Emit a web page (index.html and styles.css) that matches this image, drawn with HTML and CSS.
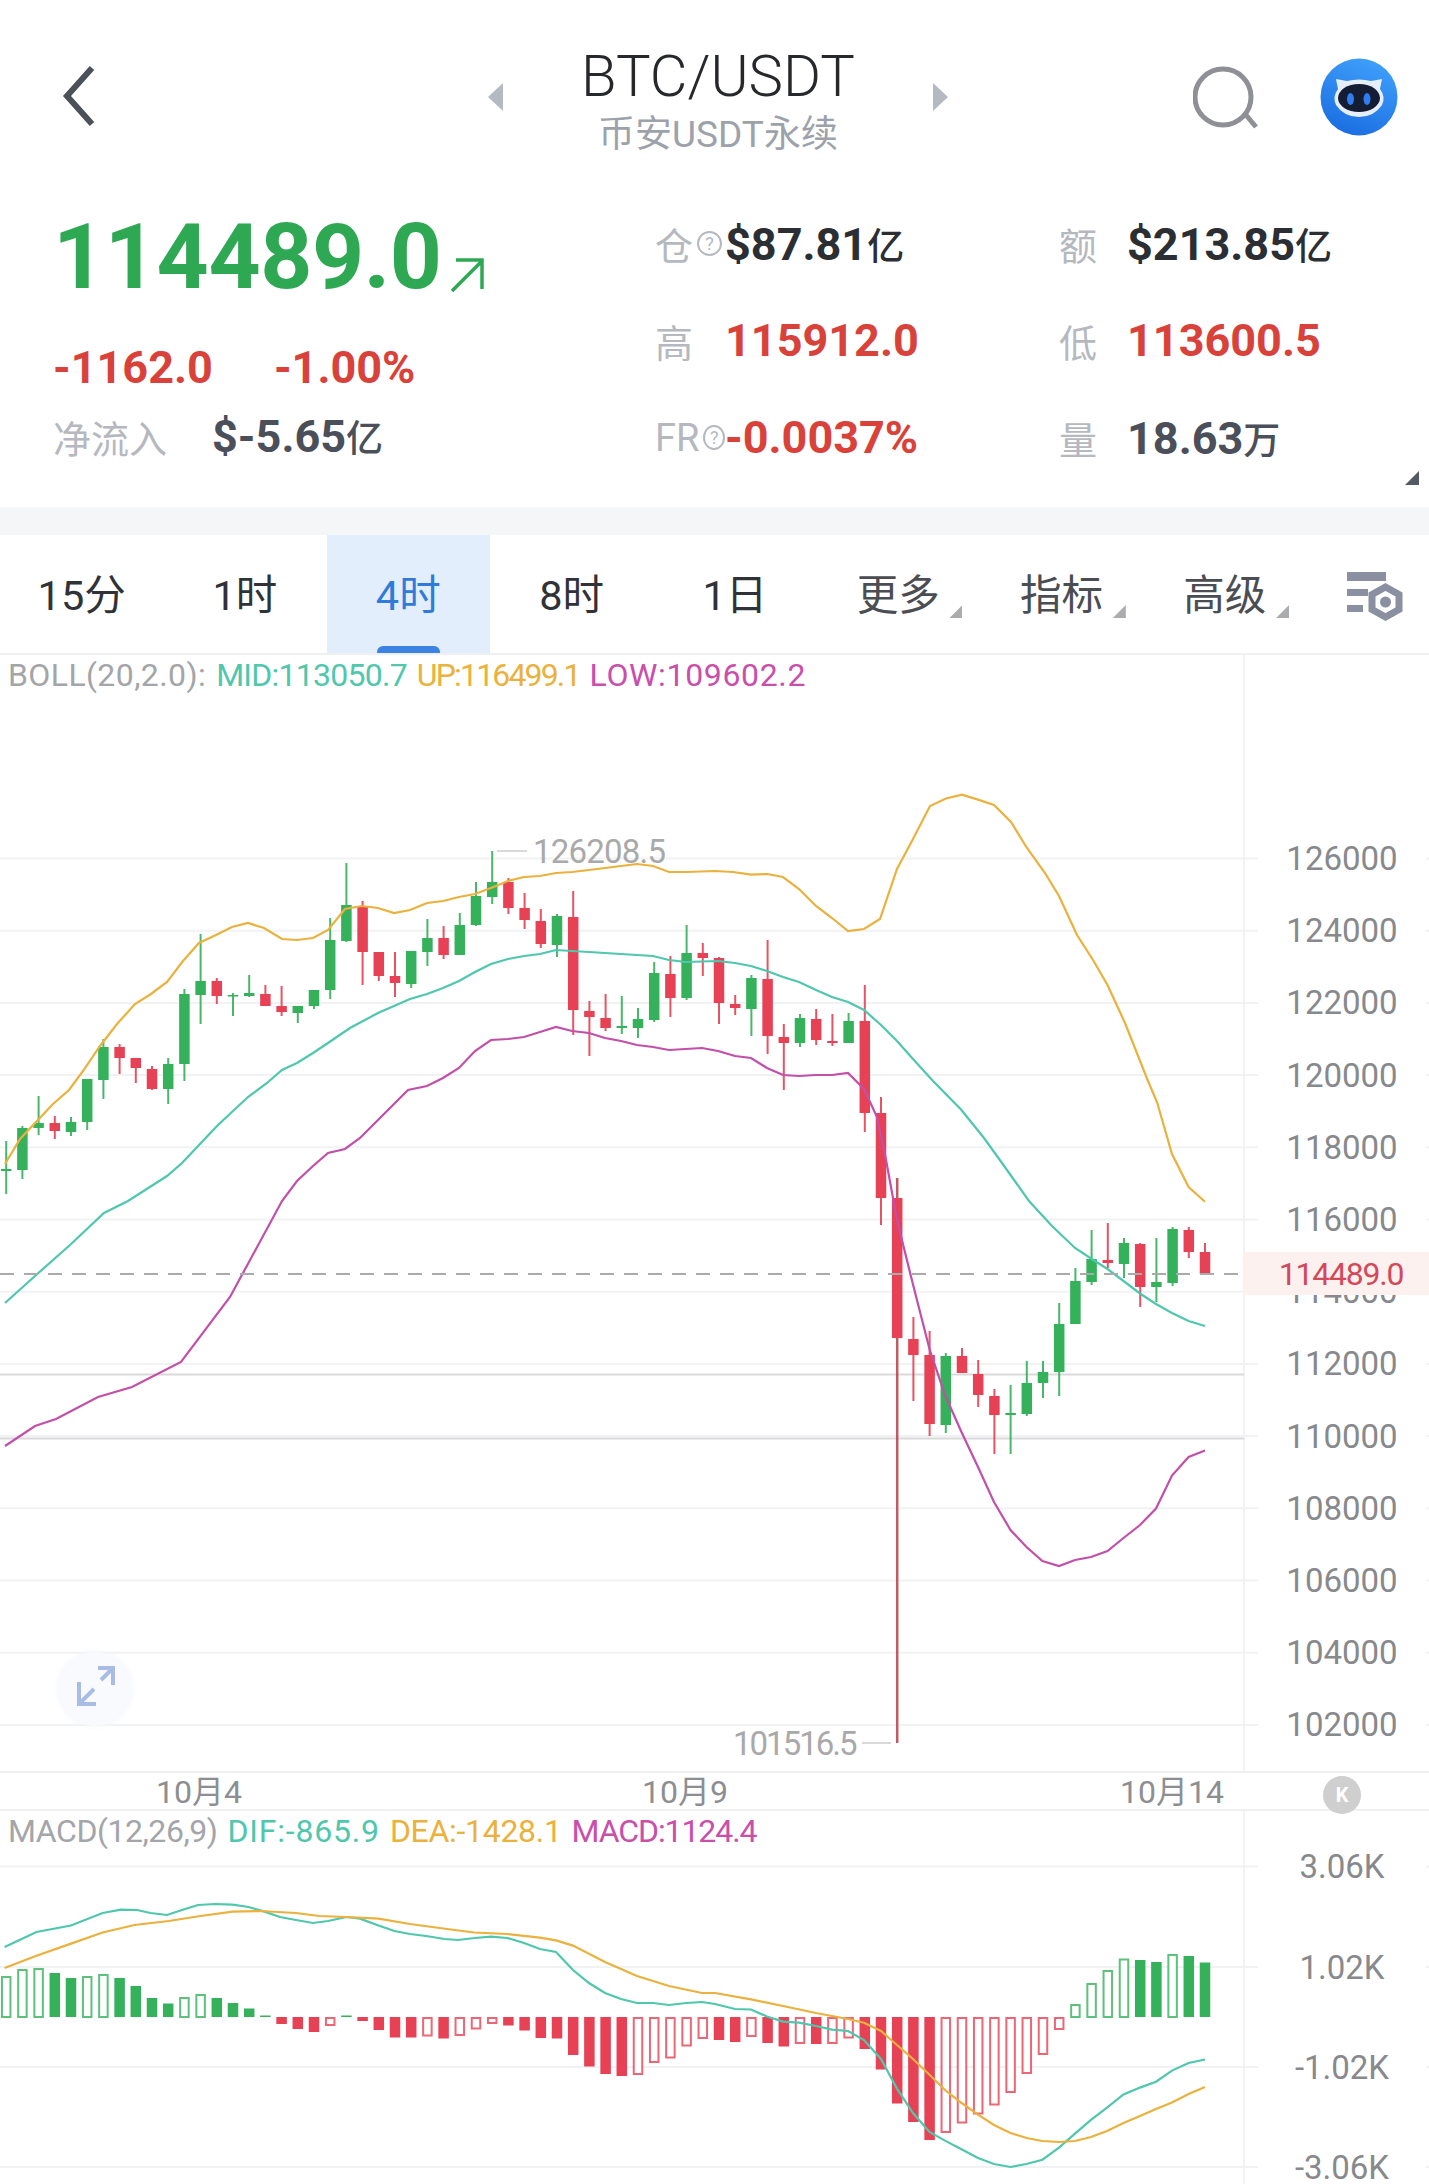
FILE: index.html
```html
<!DOCTYPE html>
<html lang="zh-CN">
<head>
  <meta charset="UTF-8" />
  <title>BTC/USDT</title>
  <link rel="stylesheet" href="styles.css">
</head>
<body>
  <header class="top">
    <svg class="back" width="34" height="62" viewBox="0 0 34 62"><path d="M30 3 L5 31 L30 59" /></svg>
    <div class="symbol">
      <span class="tri tri-left"></span>
      <div class="symbol-name">
        <div class="pair">BTC/USDT</div>
        <div class="market">币安USDT永续</div>
      </div>
      <span class="tri tri-right"></span>
    </div>
    <svg class="search" width="66" height="66" viewBox="0 0 66 66"><circle cx="30" cy="31" r="28" /><path d="M53 49 L63 61" /></svg>
    <svg class="bot" width="78" height="78" viewBox="0 0 78 78">
      <defs>
        <linearGradient id="botBg" x1="0.7" y1="0" x2="0.3" y2="1">
          <stop offset="0" stop-color="#3fa0fb" />
          <stop offset="1" stop-color="#1a6de0" />
        </linearGradient>
      </defs>
      <circle cx="39" cy="39" r="38.5" fill="url(#botBg)" />
      <path d="M16 21 L27 23 Q39 20 51 23 L62 21 L60 31 Q66 39 62 47 Q54 59 39 59 Q24 59 16 47 Q12 39 18 31 Z" fill="#e6eefb" />
      <ellipse cx="39" cy="40" rx="21" ry="14" fill="#141d33" />
      <ellipse cx="30.500" cy="41" rx="3.500" ry="6" fill="#2f7df0" />
      <ellipse cx="47" cy="41" rx="3.500" ry="6" fill="#2f7df0" />
    </svg>
  </header>

  <section class="quote">
    <div class="price-box">
      <div class="last">
        <span class="last-num">114489.0</span>
        <svg class="up-arrow" width="36" height="36" viewBox="0 0 36 36"><path d="M3 34 L33 4 M7 3 H33 V32" /></svg>
      </div>
      <div class="change">
        <span>-1162.0</span>
        <span>-1.00%</span>
      </div>
      <div class="flow">
        <span class="flow-label">净流入</span>
        <span class="flow-num">$-5.65<small>亿</small></span>
      </div>
    </div>
    <div class="stats">
      <div class="stat"><span class="stat-label">仓<i class="hint">?</i></span><b class="dark">$87.81<small>亿</small></b></div>
      <div class="stat"><span class="stat-label">额</span><b class="dark">$213.85<small>亿</small></b></div>
      <div class="stat"><span class="stat-label">高</span><b class="red">115912.0</b></div>
      <div class="stat"><span class="stat-label">低</span><b class="red">113600.5</b></div>
      <div class="stat"><span class="stat-label">FR<i class="hint">?</i></span><b class="red">-0.0037%</b></div>
      <div class="stat"><span class="stat-label">量</span><b class="muted">18.63<small>万</small></b></div>
    </div>
    <span class="corner"></span>
  </section>

  <div class="band"></div>

  <nav class="periods">
    <div class="period">15分</div>
    <div class="period">1时</div>
    <div class="period active">4时</div>
    <div class="period">8时</div>
    <div class="period">1日</div>
    <div class="period more">更多</div>
    <div class="period more">指标</div>
    <div class="period more">高级</div>
    <div class="period-icon">
      <svg width="58" height="50" viewBox="0 0 58 50">
        <path class="bars" d="M1 0 H40 V9 H1 Z M1 17 H22 V24 H1 Z M1 33 H17 V40 H1 Z" />
        <path class="nut" d="M39.500 15 L53 22.500 V37.500 L39.500 45 L26 37.500 V22.500 Z" />
        <circle class="nut-eye" cx="39.500" cy="30" r="5.500" />
      </svg>
    </div>
  </nav>

  <section class="kline">
    <div class="legend">
      <span class="c-gray ls-boll">BOLL(20,2.0):</span>
      <span class="c-teal ls-mid">MID:113050.7</span>
      <span class="c-orange ls-up">UP:116499.1</span>
      <span class="c-pink ls-low">LOW:109602.2</span>
    </div>
    <svg id="main-chart" class="chart" width="1429" height="1116" viewBox="0 654 1429 1116"></svg>
    <div class="expand">
      <svg width="44" height="44" viewBox="0 0 44 44"><path d="M5 16 V38 H22 M5 38 L20 23 M24 2 H39 V19 M39 2 L27 14" /></svg>
    </div>
  </section>

  <div class="xaxis">
    <span>10月4</span>
    <span>10月9</span>
    <span>10月14</span>
    <span class="k-btn">K</span>
  </div>

  <section class="macd">
    <div class="legend">
      <span class="c-gray ls-macd">MACD(12,26,9)</span>
      <span class="c-teal ls-dif">DIF:-865.9</span>
      <span class="c-orange ls-dea">DEA:-1428.1</span>
      <span class="c-pink ls-hist">MACD:1124.4</span>
    </div>
    <svg id="macd-chart" class="chart" width="1429" height="374" viewBox="0 1810 1429 374"></svg>
  </section>

  <script src="chart.js"></script>
</body>
</html>
```

FILE: styles.css
```css
* {
  box-sizing: border-box;
}

body {
  margin: 0;
  width: 1429px;
  height: 2184px;
  overflow: hidden;
  background: #fff;
  color: #2b2e33;
  font-family: Roboto, "Noto Sans CJK SC", sans-serif;
}

/* top bar */
.top {
  position: relative;
  height: 165px;
}

.back {
  position: absolute;
  left: 62px;
  top: 65px;
  fill: none;
  stroke: #4c5159;
  stroke-width: 6;
}

.symbol {
  display: flex;
  align-items: center;
  gap: 65px;
  padding: 45px 0 0 488px;
}

.symbol-name {
  width: 300px;
  text-align: center;
}

.pair {
  font-size: 58px;
  font-weight: 300;
  line-height: 62px;
  color: #26282c;
}

.market {
  font-size: 37px;
  line-height: 56px;
  color: #9da2aa;
}

.tri {
  width: 0;
  height: 0;
  margin-top: -14px;
  border-top: 14px solid transparent;
  border-bottom: 14px solid transparent;
}

.tri-left {
  border-right: 15px solid #b4b9c2;
}

.tri-right {
  border-left: 15px solid #b4b9c2;
}

.search {
  position: absolute;
  left: 1193px;
  top: 66px;
  fill: none;
  stroke: #8e9095;
  stroke-width: 5;
}

.bot {
  position: absolute;
  left: 1320px;
  top: 58px;
}

/* price and stats */
.quote {
  position: relative;
  display: flex;
  height: 342px;
}

.price-box {
  width: 655px;
  padding-left: 53px;
}

.last {
  display: flex;
  align-items: flex-end;
  gap: 7px;
  height: 154px;
  padding-bottom: 12px;
  color: #2fa854;
}

.last-num {
  font-size: 91px;
  font-weight: 700;
  line-height: 100px;
  letter-spacing: -0.4px;
}

.up-arrow {
  margin-bottom: 14px;
  fill: none;
  stroke: #2fa854;
  stroke-width: 3.500;
}

.change {
  display: flex;
  gap: 61px;
  height: 90px;
  padding-top: 22px;
  font-size: 45px;
  font-weight: 700;
  line-height: 54px;
  color: #d9423a;
}

.flow {
  display: flex;
  align-items: center;
  gap: 45px;
  height: 60px;
  margin-top: -3px;
}

.flow-label {
  font-size: 38px;
  color: #b5b8be;
}

.flow-num {
  font-size: 45px;
  font-weight: 700;
  color: #4a4f59;
}

small {
  font-size: 37px;
  font-weight: 500;
}

.stats {
  display: grid;
  grid-template-columns: 404px 1fr;
  grid-auto-rows: 97px;
  padding-top: 30px;
}

.stat {
  display: flex;
  align-items: center;
  font-size: 45px;
}

.stat-label {
  display: flex;
  align-items: center;
  width: 70px;
  font-size: 38px;
  color: #b5b8be;
  white-space: nowrap;
}

.stat:nth-child(even) .stat-label {
  width: 68px;
}

.hint {
  width: 25px;
  height: 25px;
  margin-left: 4px;
  border: 2px solid #b5b8be;
  border-radius: 50%;
  font-size: 18px;
  font-style: normal;
  line-height: 21px;
  text-align: center;
}

.stat b {
  font-weight: 700;
  white-space: nowrap;
}

.stat .dark {
  color: #2b2e33;
}

.stat .red {
  color: #d9423a;
}

.stat .muted {
  color: #4a4f59;
}

.corner {
  position: absolute;
  right: 10px;
  bottom: 22px;
  width: 14px;
  height: 14px;
  background: #555a62;
  clip-path: polygon(100% 0, 100% 100%, 0 100%);
}

.band {
  height: 28px;
  background: #f5f6f8;
}

/* period tabs */
.periods {
  display: flex;
  height: 120px;
  border-bottom: 2px solid #eef0f2;
}

.period {
  position: relative;
  width: 163.300px;
  padding-top: 33px;
  font-size: 41.500px;
  line-height: 56px;
  text-align: center;
  color: #2f3237;
}

.period.active {
  background: #e3eefc;
  color: #2f7bdc;
}

.period.active::after {
  content: "";
  position: absolute;
  left: 50px;
  bottom: 0;
  width: 63px;
  height: 7px;
  border-radius: 6px 6px 0 0;
  background: #3c82e2;
}

.period.more {
  color: #4a4d52;
}

.period.more::after {
  content: "";
  position: absolute;
  left: 133px;
  top: 70px;
  width: 13px;
  height: 13px;
  background: #aaacae;
  clip-path: polygon(100% 0, 100% 100%, 0 100%);
}

.period-icon {
  flex: 1;
  padding: 37px 0 0 40px;
}

.bars {
  fill: #8a8fa2;
}

.nut {
  fill: none;
  stroke: #8a8fa2;
  stroke-width: 7;
}

.nut-eye {
  fill: #8a8fa2;
}

/* charts */
.kline {
  position: relative;
  height: 1116px;
}

.macd {
  position: relative;
  height: 374px;
}

.chart {
  display: block;
}

.legend {
  position: absolute;
  left: 8px;
  top: -1px;
  display: flex;
  gap: 10px;
  font-size: 32px;
  line-height: 42px;
  white-space: nowrap;
}

.c-gray { color: #a3a5a8; }
.c-teal { color: #4fc7ad; }
.c-orange { color: #eab13d; }
.c-pink { color: #c94fab; }

.ls-boll { letter-spacing: 0.4px; }
.ls-mid { letter-spacing: -0.75px; }
.ls-up { letter-spacing: -1.85px; }
.ls-low { letter-spacing: 0.65px; }
.ls-macd { letter-spacing: -0.45px; }
.ls-dif { letter-spacing: 0.8px; }
.ls-dea { letter-spacing: -0.3px; }
.ls-hist { letter-spacing: -1.1px; }

.expand {
  position: absolute;
  left: 58px;
  top: 997px;
  width: 74px;
  height: 74px;
  padding: 14px 0 0 16px;
  border-radius: 50%;
  background: #f9fafd;
  box-shadow: 0 0 6px #f3f5fb;
}

.expand path {
  fill: none;
  stroke: #a9bde4;
  stroke-width: 4;
}

.xaxis {
  position: relative;
  display: grid;
  grid-template-columns: 398px 574px 400px;
  height: 40px;
  border-top: 2px solid #eef0f2;
  border-bottom: 2px solid #eef0f2;
  font-size: 32px;
  line-height: 38px;
  text-align: center;
  color: #8c8e92;
}

.k-btn {
  position: absolute;
  left: 1323px;
  top: 3px;
  width: 38px;
  height: 38px;
  border-radius: 50%;
  background: #cfcfcf;
  font-size: 20px;
  font-weight: 700;
  line-height: 38px;
  color: #fff;
}

.axis-text {
  font-family: Roboto, sans-serif;
  font-size: 33px;
  fill: #87898d;
  text-anchor: middle;
  dominant-baseline: central;
}

.mark-text {
  font-family: Roboto, sans-serif;
  font-size: 33px;
  fill: #a9a9a9;
  dominant-baseline: central;
}

.mark-high {
  letter-spacing: -0.8px;
}

.mark-low {
  letter-spacing: -2px;
}

.now-text {
  font-family: Roboto, sans-serif;
  font-size: 32px;
  letter-spacing: -1.2px;
  fill: #d3485a;
  text-anchor: middle;
  dominant-baseline: central;
}

.grid-line {
  stroke: #f1f2f4;
  stroke-width: 2;
}

.alert-line {
  stroke: #d9d9dc;
  stroke-width: 2;
}

.now-line {
  stroke: #aaa;
  stroke-width: 2;
  stroke-dasharray: 14 10;
}

.series {
  fill: none;
  stroke-width: 2.200;
}

.s-teal { stroke: #4fc7ad; }
.s-orange { stroke: #eab13d; }
.s-pink { stroke: #c24fa8; }
```

FILE: chart.js
```js
const NS = 'http://www.w3.org/2000/svg';
const GREEN = '#34b15a';
const RED = '#e64154';
const STEP = 16.2;
const LAST_X = 1205;
const AXIS_X = 1244;

// high, body top, body bottom, low, colour (page pixels)
const candles = [
  [1140, 1168, 1170, 1193, 'g'], [1125, 1127, 1169, 1178, 'g'], [1095, 1122, 1127, 1134, 'g'],
  [1115, 1122, 1130, 1138, 'r'], [1116, 1121, 1131, 1135, 'g'], [1078, 1078, 1121, 1129, 'g'],
  [1038, 1046, 1079, 1098, 'g'], [1043, 1046, 1057, 1073, 'r'], [1057, 1057, 1067, 1082, 'r'],
  [1065, 1068, 1088, 1089, 'r'], [1057, 1063, 1088, 1103, 'g'], [988, 993, 1063, 1080, 'g'],
  [933, 980, 994, 1023, 'g'], [977, 980, 995, 1003, 'r'], [992, 994, 995.5, 1015, 'g'],
  [974, 992, 995, 996, 'g'], [984, 993, 1005, 1005, 'r'], [985, 1005, 1011, 1015, 'r'],
  [1005, 1005, 1012, 1022, 'g'], [989, 989, 1005, 1008, 'g'], [917, 939, 989, 998, 'g'],
  [862, 904, 940, 941, 'g'], [900, 906, 951, 984, 'r'], [951, 951, 975, 980, 'r'],
  [951, 975, 982, 996, 'r'], [950, 950, 983, 987, 'g'], [918, 937, 951, 965, 'g'],
  [925, 937, 954, 958, 'r'], [912, 924, 954, 954, 'g'], [881, 895, 924, 925, 'g'],
  [850, 881, 896, 903, 'g'], [877, 881, 907, 913, 'r'], [892, 907, 919, 928, 'r'],
  [908, 920, 943, 947, 'r'], [913, 915, 944, 956, 'g'], [890, 916, 1009, 1034, 'r'],
  [1000, 1010, 1016, 1055, 'r'], [993, 1017, 1027, 1030, 'r'], [995, 1025, 1027, 1033, 'g'],
  [1007, 1018, 1027, 1037, 'g'], [961, 972, 1019, 1021, 'g'], [955, 973, 997, 1016, 'r'],
  [924, 952, 997, 999, 'g'], [942, 952, 957, 975, 'r'], [956, 957, 1002, 1023, 'r'],
  [994, 1003, 1007, 1014, 'r'], [974, 977, 1008, 1035, 'g'], [939, 978, 1035, 1053, 'r'],
  [1023, 1036, 1042, 1089, 'r'], [1013, 1017, 1042, 1046, 'g'], [1008, 1018, 1039, 1044, 'r'],
  [1013, 1040, 1042, 1045, 'r'], [1012, 1020, 1042, 1042, 'g'], [984, 1020, 1112, 1131, 'r'],
  [1096, 1112, 1197, 1224, 'r'], [1177, 1197, 1337, 1742, 'r'], [1316, 1338, 1354, 1400, 'r'],
  [1330, 1354, 1423, 1435, 'r'], [1352, 1355, 1424, 1432, 'g'], [1347, 1355, 1372, 1372, 'r'],
  [1359, 1373, 1394, 1406, 'r'], [1388, 1395, 1414, 1453, 'r'], [1384, 1412, 1414, 1453, 'g'],
  [1360, 1382, 1413, 1415, 'g'], [1360, 1371, 1382, 1397, 'g'], [1302, 1323, 1371, 1395, 'g'],
  [1267, 1280, 1323, 1323, 'g'], [1229, 1258, 1281, 1284, 'g'], [1222, 1259, 1262, 1267, 'r'],
  [1237, 1242, 1263, 1277, 'g'], [1242, 1243, 1286, 1306, 'r'], [1237, 1281, 1286, 1301, 'g'],
  [1226, 1228, 1282, 1285, 'g'], [1226, 1229, 1251, 1257, 'r'], [1242, 1251, 1273, 1273, 'r']
];

// signed bar height in pixels, second value true when the bar is hollow
const macdBars = [
  [41, 1], [48, 1], [49, 1], [44], [39], [41, 1], [43, 1], [39], [31], [19], [13.5], [20, 1], [23, 1], [19], [14], [8.5], [1.5],
  [-7], [-12], [-15], [-8, 1], [1.5], [-4], [-13], [-20.5], [-20.5], [-18.5, 1], [-21.5], [-18, 1], [-11.5, 1], [-6, 1],
  [-8.5], [-13.5], [-21], [-21.5], [-38], [-49.5], [-57], [-59], [-57, 1], [-45, 1], [-40.5, 1], [-28.5, 1], [-21, 1],
  [-23], [-25], [-19, 1], [-26], [-29.5], [-26, 1], [-27], [-26, 1], [-20.5, 1], [-32], [-52.5], [-86.5], [-105], [-123],
  [-115, 1], [-105.5, 1], [-96.5, 1], [-87.5, 1], [-75, 1], [-56, 1], [-37, 1], [-12, 1],
  [13, 1], [34, 1], [47, 1], [58.5, 1], [57], [55], [63, 1], [61], [54.5]
];

const bollUp = '5,1163 20,1138 37,1120 53,1103 69,1089 83,1070 100,1045 117,1023 135,1003 151,993 167,981 183,960 199,942 216,934 232,926 248,922 264,927 282,938 297,939 313,937 328,929 345,908 362,905 378,907 394,912 410,909 427,902 443,900 459,896 475,893 491,887 508,880 524,876 540,875 556,872 572,871 589,869 605,867 621,865 637,863 653,865 669,871 686,871 715,870 733,871 751,873.6 767,873 783,876 799,888 816,905 832,917 848,930 864,928 880,918 897,868 913,838 930,805 946,797.5 962,793.6 978,798.6 994,804 1011,821 1027,847 1045,872 1059,895 1077,934 1093,959 1107.5,984 1125,1022 1148,1080 1157,1101 1172,1153 1188.6,1186 1205,1200.7';
const bollMid = '5,1302 35,1275 70,1244 104,1212 128,1200 167,1175 182,1162 200,1143 217,1125 233,1110 248,1096 267,1082 282,1069 297,1062 313,1052 328,1042 350,1027 378,1012 394,1005 410,998 427,993 443,987 459,980 475,971 491,963 508,958 524,955 540,953 556,949 572,950 589,951 621,953 653,955 669,959 686,961 718,960 735,962 751,965 767,970 783,976 799,981 816,989 832,996 848,1001 864,1009 881,1024 897,1040 913,1058 933,1080 961,1108.6 984,1137 1002,1162 1029,1200 1052,1225 1075,1247 1091,1257.5 1107.5,1268 1123.5,1280 1140,1292.5 1156,1303 1172,1312 1188.6,1320 1205,1325';
const bollLow = '5,1445 35,1425 56,1418 98,1396 132,1386 181,1361 230,1296 282,1200 297,1180 313,1165 328,1152 345,1148 360,1137 408,1089 427,1085 443,1077 459,1067 475,1050 491,1039 508,1038 524,1036 540,1031 556,1026 572,1030 589,1032 605,1037 621,1040 637,1044 653,1046 669,1049 702,1047 718,1050 735,1055 751,1057 767,1067 783,1074 799,1075 816,1074 832,1074 848,1072 864,1088 877,1116 886,1158.6 897,1219 913,1283.6 929.5,1348 945,1394 961,1430 978,1466 994,1501 1010.5,1529 1026.5,1546 1042.4,1560 1059,1565 1075,1559 1091,1556 1107.5,1550 1123.5,1537 1140,1524 1156,1507.5 1172,1474.6 1188.6,1456 1205,1449.6';
const dif = '4.6,1946 36.5,1931 71,1924.5 102.6,1912 121,1908.6 137,1909 150.5,1912 167,1914 182,1909 198,1904 215,1903 232.6,1903.7 248.5,1906 264.5,1910.6 280,1916 296,1919 313,1922 328,1920 346.6,1916 360,1917.6 378.5,1924.5 394.4,1930 410,1933 426,1935 444.6,1938 458,1939 474.7,1937 491,1935.6 507.5,1937 524,1942 540,1948 556,1951 573,1969 589,1982 605,1992 621,1998 637,2002 653,2002 669,2004 686,2002 702,2001 715,2003 735,2008 751,2008.5 767,2015.5 783,2020.6 799,2021.7 816,2025 832,2028.6 848,2030 864,2039 881,2058 897,2087.6 913,2112 929.5,2131 945,2139.6 961,2148 978,2157 994,2163 1010.5,2166 1026.5,2163 1042.4,2158.7 1059,2146.6 1075,2132.7 1091,2118.8 1107,2106.7 1123.5,2093.5 1140,2086.6 1156,2080.7 1172,2069.6 1188.6,2062 1205,2058.5';
const dea = '4.6,1967 36.5,1954.7 71,1942.6 102.6,1931.5 134.5,1924 168.7,1920 200.6,1915 232.6,1910.6 260,1910 296,1912 319,1915 346.6,1916 378.5,1917.6 410,1923 447,1928 474,1931.5 507.5,1933 540,1936.7 556,1939.4 573,1944.6 605,1961 637,1975 669,1985 702,1992 715,1992 751,1998.4 783,2005 816,2012 848,2018 864,2021.7 881,2030 897,2044 913,2058 929.5,2073.7 945,2089 961,2101.5 978,2113.6 994,2124 1010.5,2132 1026.5,2137 1042.4,2140 1059,2141 1075,2140 1091,2136 1107,2130 1123.5,2122 1140,2115 1156,2108 1172,2101.5 1188.6,2093 1205,2086';

function el(parent, tag, attrs, text) {
  const node = document.createElementNS(NS, tag);
  for (const key in attrs) node.setAttribute(key, attrs[key]);
  if (text) node.textContent = text;
  parent.appendChild(node);
  return node;
}

function xAt(i) {
  return LAST_X - STEP * (candles.length - 1 - i);
}

function drawSeries(svg, points, cls) {
  el(svg, 'polyline', { class: 'series ' + cls, points: points });
}

function drawGrid(svg, rows) {
  rows.forEach(row => {
    el(svg, 'line', { class: 'grid-line', x1: 0, x2: 1258, y1: row.y, y2: row.y });
    el(svg, 'line', { class: 'grid-line', x1: 1426, x2: 1429, y1: row.y, y2: row.y });
    el(svg, 'text', { class: 'axis-text', x: 1342, y: row.y }, row.label);
  });
}

function drawMain() {
  const svg = document.getElementById('main-chart');
  el(svg, 'line', { class: 'grid-line', x1: AXIS_X, x2: AXIS_X, y1: 654, y2: 1770 });

  const rows = [];
  for (let p = 126000; p >= 102000; p -= 2000) {
    rows.push({ y: 857.5 + (126000 - p) * 72.2 / 2000, label: String(p) });
  }
  drawGrid(svg, rows);

  el(svg, 'line', { class: 'alert-line', x1: 0, x2: AXIS_X, y1: 1373.5, y2: 1373.5 });
  el(svg, 'line', { class: 'alert-line', x1: 0, x2: AXIS_X, y1: 1437.5, y2: 1437.5 });

  candles.forEach((c, i) => {
    const x = xAt(i);
    const color = c[4] === 'g' ? GREEN : RED;
    // the flash-crash wick is drawn darker in the app
    const long = c[3] - c[0] > 300;
    el(svg, 'line', { x1: x, x2: x, y1: c[0], y2: c[3], stroke: long ? '#b84a55' : color, 'stroke-width': long ? 2.5 : 2, opacity: 0.9 });
    el(svg, 'rect', { x: x - 5.25, y: c[1], width: 10.5, height: Math.max(c[2] - c[1], 1.5), fill: color });
  });

  drawSeries(svg, bollUp, 's-orange');
  drawSeries(svg, bollMid, 's-teal');
  drawSeries(svg, bollLow, 's-pink');

  el(svg, 'line', { class: 'now-line', x1: 0, x2: AXIS_X, y1: 1273, y2: 1273 });
  el(svg, 'rect', { x: AXIS_X, y: 1251, width: 185, height: 43, fill: '#fdf1ef' });
  el(svg, 'text', { class: 'now-text', x: 1341, y: 1273 }, '114489.0');

  el(svg, 'line', { class: 'alert-line', x1: 497, x2: 527, y1: 850, y2: 850 });
  el(svg, 'text', { class: 'mark-text mark-high', x: 533, y: 850 }, '126208.5');
  el(svg, 'line', { class: 'alert-line', x1: 862, x2: 891, y1: 1742, y2: 1742 });
  el(svg, 'text', { class: 'mark-text mark-low', x: 733, y: 1742 }, '101516.5');
}

function drawMacd() {
  const svg = document.getElementById('macd-chart');
  const zero = 2016;
  el(svg, 'line', { class: 'grid-line', x1: AXIS_X, x2: AXIS_X, y1: 1810, y2: 2184 });
  drawGrid(svg, [
    { y: 1865.5, label: '3.06K' },
    { y: 1966, label: '1.02K' },
    { y: 2066, label: '-1.02K' },
    { y: 2166, label: '-3.06K' }
  ]);

  macdBars.forEach((bar, i) => {
    const h = bar[0];
    const color = h > 0 ? GREEN : RED;
    const top = h > 0 ? zero - h : zero;
    const attrs = { x: xAt(i) - 5.25, y: top, width: 10.5, height: Math.abs(h) };
    if (bar[1]) {
      attrs.x += 1;
      attrs.y += 1;
      attrs.width -= 2;
      attrs.height = Math.max(attrs.height - 1, 1);
      attrs.fill = '#fff';
      attrs.stroke = color;
      attrs['stroke-width'] = 2;
      attrs['stroke-opacity'] = 0.8;
    } else {
      attrs.fill = color;
    }
    el(svg, 'rect', attrs);
  });

  drawSeries(svg, dif, 's-teal');
  drawSeries(svg, dea, 's-orange');
}

drawMain();
drawMacd();
```
